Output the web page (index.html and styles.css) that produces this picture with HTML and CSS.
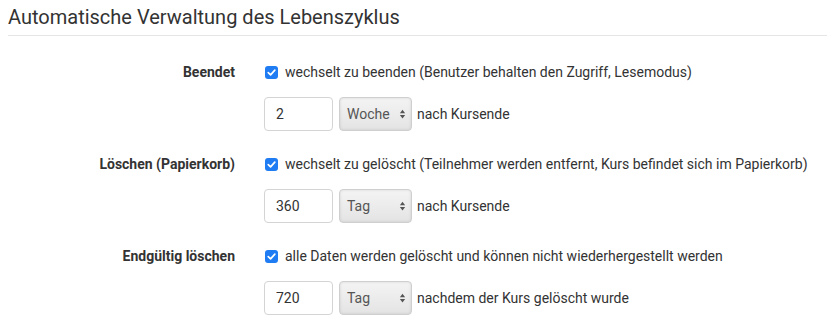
FILE: index.html
```html
<!DOCTYPE html>
<html lang="de">
<head>
  <meta charset="UTF-8" />
  <title>Lebenszyklus</title>
  <link rel="stylesheet" href="styles.css">
</head>
<body>
  <fieldset class="lifecycle">
    <legend class="lifecycle-title">Automatische Verwaltung des Lebenszyklus</legend>

    <div class="form-group">
      <label class="control-label">Beendet</label>
      <div class="controls">
        <div class="check-row">
          <span class="check"><svg viewBox="0 0 14 14" width="13" height="13"><path d="M3.5 7.2 L6 9.6 L10.6 4.4" fill="none" stroke="#fff" stroke-width="1.8" stroke-linecap="round" stroke-linejoin="round"/></svg></span>
          <span>wechselt zu beenden (Benutzer behalten den Zugriff, Lesemodus)</span>
        </div>
        <div class="input-row">
          <input class="num" type="text" value="2">
          <div class="select"><span>Woche</span><svg class="arrows" viewBox="0 0 8 12" width="7" height="12"><path d="M4 1 L7 5 H1 Z M4 11 L1 7 H7 Z" fill="#555"/></svg></div>
          <span>nach Kursende</span>
        </div>
      </div>
    </div>

    <div class="form-group">
      <label class="control-label">Löschen (Papierkorb)</label>
      <div class="controls">
        <div class="check-row">
          <span class="check"><svg viewBox="0 0 14 14" width="13" height="13"><path d="M3.5 7.2 L6 9.6 L10.6 4.4" fill="none" stroke="#fff" stroke-width="1.8" stroke-linecap="round" stroke-linejoin="round"/></svg></span>
          <span>wechselt zu gelöscht (Teilnehmer werden entfernt, Kurs befindet sich im Papierkorb)</span>
        </div>
        <div class="input-row">
          <input class="num" type="text" value="360">
          <div class="select"><span>Tag</span><svg class="arrows" viewBox="0 0 8 12" width="7" height="12"><path d="M4 1 L7 5 H1 Z M4 11 L1 7 H7 Z" fill="#555"/></svg></div>
          <span>nach Kursende</span>
        </div>
      </div>
    </div>

    <div class="form-group">
      <label class="control-label">Endgültig löschen</label>
      <div class="controls">
        <div class="check-row">
          <span class="check"><svg viewBox="0 0 14 14" width="13" height="13"><path d="M3.5 7.2 L6 9.6 L10.6 4.4" fill="none" stroke="#fff" stroke-width="1.8" stroke-linecap="round" stroke-linejoin="round"/></svg></span>
          <span>alle Daten werden gelöscht und können nicht wiederhergestellt werden</span>
        </div>
        <div class="input-row">
          <input class="num" type="text" value="720">
          <div class="select"><span>Tag</span><svg class="arrows" viewBox="0 0 8 12" width="7" height="12"><path d="M4 1 L7 5 H1 Z M4 11 L1 7 H7 Z" fill="#555"/></svg></div>
          <span>nachdem der Kurs gelöscht wurde</span>
        </div>
      </div>
    </div>
  </fieldset>
</body>
</html>
```

FILE: styles.css
```css
body, html {
  margin: 0;
  padding: 0;
  background: #fff;
  color: #333;
  font-family: Roboto, "Liberation Sans", sans-serif;
  font-size: 14px;
}

.lifecycle {
  border: 0;
  margin: 0;
  padding: 0 0 0 8px;
  min-width: 0;
}

.lifecycle-title {
  display: block;
  width: 100%;
  box-sizing: border-box;
  padding: 5px 0 5px;
  font-size: 20px;
  line-height: 25px;
  color: #333;
  border-bottom: 1px solid #e5e5e5;
}

.lifecycle-title + .form-group {
  margin-top: 26px;
}

.form-group {
  display: flex;
  margin-bottom: 23px;
}

.control-label {
  width: 256px;
  text-align: right;
  font-weight: bold;
  line-height: 20px;
  padding-right: 29px;
  box-sizing: border-box;
  flex: 0 0 auto;
}

.controls {
  display: flex;
  flex-direction: column;
  gap: 15px;
}

.check-row {
  display: flex;
  align-items: center;
  height: 20px;
  gap: 7px;
}

.check {
  width: 13px;
  height: 13px;
  border-radius: 3px;
  background: #1f7cf2;
  display: flex;
  margin-left: 1px;
}

.input-row {
  display: flex;
  align-items: center;
  height: 34px;
}

.num {
  width: 69px;
  height: 34px;
  box-sizing: border-box;
  border: 1px solid #d4d4d4;
  border-radius: 4px;
  padding: 0 11px;
  font: inherit;
  color: #333;
  margin: 0 6px 0 0;
}

.select {
  width: 73px;
  height: 34px;
  box-sizing: border-box;
  border: 1px solid #cfcfcf;
  border-radius: 4px;
  background: linear-gradient(#f4f4f4, #e4e4e4);
  box-shadow: inset 0 0 3px rgba(0,0,0,0.12);
  display: flex;
  align-items: center;
  justify-content: space-between;
  padding: 0 5px 0 7px;
  color: #555;
  margin-right: 5px;
}
```
